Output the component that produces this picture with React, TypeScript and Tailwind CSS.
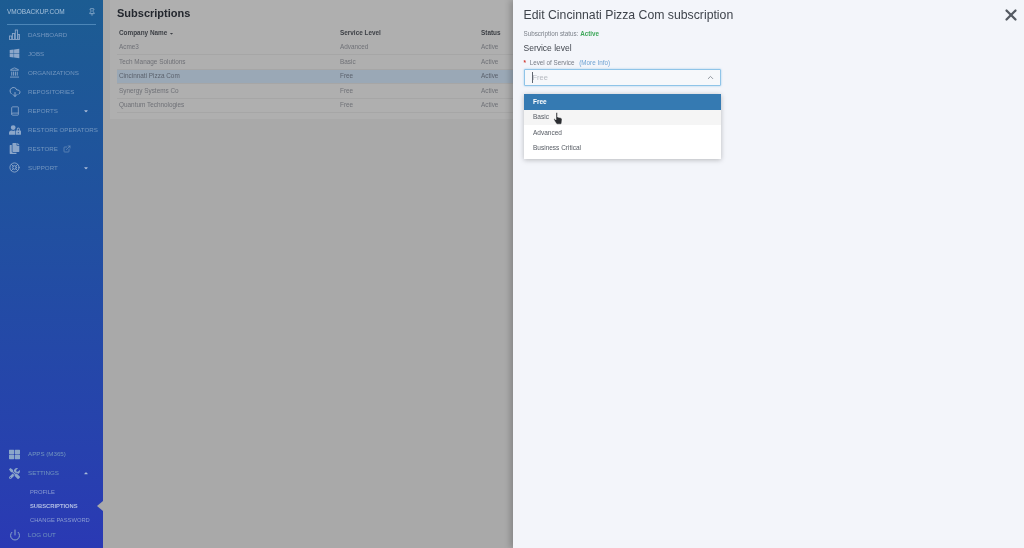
import { Book, ChevronUp, CloudDownload, ExternalLink, Landmark, LifeBuoy, Pin, Power, X } from "lucide-react";
import type { ReactNode } from "react";
import { FaWindows, FaUserLock, FaCopy, FaThLarge, FaTools, FaCaretDown, FaCaretUp } from "react-icons/fa";

const rows = [
  { name: "Acme3", level: "Advanced" },
  { name: "Tech Manage Solutions", level: "Basic" },
  { name: "Cincinnati Pizza Com", level: "Free", active: true },
  { name: "Synergy Systems Co", level: "Free" },
  { name: "Quantum Technologies", level: "Free" },
];

function BarsIcon() {
  return (
    <svg width="11" height="11" viewBox="0 0 11 11" fill="none" stroke="currentColor" strokeWidth="0.9">
      <rect x="0.5" y="7" width="2.2" height="3.5" />
      <rect x="3.400" y="4.5" width="2.2" height="6" />
      <rect x="6.300" y="1" width="2.200" height="9.500" />
      <rect x="9" y="5.500" width="1.500" height="5" />
    </svg>
  );
}

function NavItem({ icon, label, caret, children }: { icon: ReactNode; label: string; caret?: "up" | "down"; children?: ReactNode }) {
  return (
    <div className="flex h-[19px] items-center pl-[2px] pr-[14px] text-[6.2px] text-[#7396bf]">
      <span className="mr-[1px] flex w-[25px] shrink-0 justify-center text-[11px] text-[#8ba6c9]">{icon}</span>
      <span className="whitespace-nowrap">{label}</span>
      {children}
      {caret && (
        <span className="ml-auto text-[6px] text-[#a9bbd8]">
          {caret === "up" ? <FaCaretUp /> : <FaCaretDown />}
        </span>
      )}
    </div>
  );
}

export default function App() {
  return (
    <div className="flex h-[548px] w-[1024px] overflow-hidden bg-[#a9a9a9] font-['Liberation_Sans',Arial,sans-serif]">
      {/* Sidebar, dimmed behind the panel */}
      <aside className="relative w-[103px] shrink-0 bg-gradient-to-b from-[#1c5c92] to-[#2a39b4]">
        <div className="flex h-full flex-col blur-[0.45px]">
          <div className="mx-[7px] flex h-[25px] items-center justify-between border-b border-[#4c86b8] text-[6.5px] text-[#a6c0da]">
            <span>VMOBACKUP.COM</span>
            <Pin size={8} />
          </div>
          <div>
            <NavItem icon={<BarsIcon />} label="DASHBOARD" />
            <NavItem icon={<FaWindows />} label="JOBS" />
            <NavItem icon={<Landmark size={11} />} label="ORGANIZATIONS" />
            <NavItem icon={<CloudDownload size={12} />} label="REPOSITORIES" />
            <NavItem icon={<Book size={10} />} label="REPORTS" caret="down" />
            <NavItem icon={<FaUserLock className="text-[12px]" />} label="RESTORE OPERATORS" />
            <NavItem icon={<FaCopy />} label="RESTORE">
              <ExternalLink size={8} className="ml-[5px]" />
            </NavItem>
            <NavItem icon={<LifeBuoy size={11} />} label="SUPPORT" caret="down" />
          </div>
          <div className="mt-auto pb-[3.5px]">
            <NavItem icon={<FaThLarge />} label="APPS (M365)" />
            <NavItem icon={<FaTools />} label="SETTINGS" caret="up" />
            <div className="-mb-[1.5px] pl-[30px] pt-[2.5px] text-[5.8px] leading-[14px] text-[#8a9bd2]">
              <div>PROFILE</div>
              <div className="font-bold text-[#b3bfe4]">SUBSCRIPTIONS</div>
              <div>CHANGE PASSWORD</div>
            </div>
            <NavItem icon={<Power size={12} />} label="LOG OUT" />
          </div>
        </div>
        <span className="absolute bottom-[37px] right-0 h-0 w-0 border-y-[5px] border-r-[6px] border-y-transparent border-r-[#a9a9a9]" />
      </aside>

      {/* Page under the overlay */}
      <main className="min-w-0 flex-1 pl-[7px]">
        <div className="h-[119px] overflow-hidden bg-[#afafaf] pl-[7px] blur-[0.45px]">
          <h1 className="pt-[6px] text-[11px] leading-[15px] font-bold text-[#23272e]">Subscriptions</h1>
          <table className="mt-[5px] w-full table-fixed text-[6.4px] text-[#6f7177]">
            <thead>
              <tr className="h-[14px] text-left font-bold text-[#3d4046]">
                <th className="w-[223px] pl-[2px]">Company Name <FaCaretDown className="inline text-[5px]" /></th>
                <th className="w-[141px]">Service Level</th>
                <th>Status</th>
              </tr>
            </thead>
            <tbody>
              {rows.map((r) => (
                <tr key={r.name} className={`h-[14.5px] border-b border-[#a6a6a6] ${r.active ? "bg-[#9aa8b6] text-[#5c626d]" : ""}`}>
                  <td className="pl-[2px]">{r.name}</td>
                  <td>{r.level}</td>
                  <td>Active</td>
                </tr>
              ))}
            </tbody>
          </table>
        </div>
      </main>

      {/* Edit panel */}
      <section className="relative w-[511px] shrink-0 bg-[#f3f5fa] pl-[10.5px] shadow-[-3px_0_6px_rgba(0,0,0,0.2)]">
        <button className="absolute right-[4px] top-[6px] text-[#555a62]">
          <X size={18} strokeWidth={3} />
        </button>
        <div className="blur-[0.3px]">
          <h2 className="pt-[7px] text-[12.25px] leading-[17px] text-[#3f444c]">Edit Cincinnati Pizza Com subscription</h2>
          <p className="mt-[5px] text-[6.3px] leading-[9px] text-[#7b8089]">
            Subscription status: <span className="font-bold text-[#3fa85a]">Active</span>
          </p>
          <p className="mt-[5px] text-[8.5px] leading-[11px] text-[#42474f]">Service level</p>
          <p className="mt-[4px] text-[6.3px] leading-[9px] text-[#767b84]">
            <span className="mr-[2px] font-bold text-[#d0342c]">*</span> Level of Service{" "}
            <span className="ml-[3px] text-[#6fa3d3]">(More Info)</span>
          </p>
          <div className="mt-[2px] flex h-[17px] w-[197.5px] items-center justify-between rounded-[1px] border border-[#8fc4e8] bg-[#f6f8fb] pl-[7px] pr-[5px] text-[7.5px] text-[#b6bac1] shadow-[0_0_2px_rgba(90,170,225,0.6)]">
            <span className="border-l border-[#5f6670]">Free</span>
            <ChevronUp size={9} strokeWidth={2.5} className="text-[#8b9098]" />
          </div>
          <div className="mt-[8px] w-[197px] bg-white pb-[3px] text-[6.5px] text-[#555a62] shadow-[0_1px_5px_rgba(0,0,0,0.25)]">
            <div className="flex h-[15.5px] items-center bg-[#357ab2] pl-[9.5px] font-bold text-white">Free</div>
            <div className="flex h-[15.5px] items-center bg-[#f5f5f5] pl-[9.5px]">Basic</div>
            <div className="flex h-[15.5px] items-center pl-[9.5px]">Advanced</div>
            <div className="flex h-[15.5px] items-center pl-[9.5px]">Business Critical</div>
          </div>
        </div>
        {/* Hand cursor from the recording */}
        <svg className="absolute left-[40px] top-[112px]" width="10" height="13" viewBox="0 0 10 13">
          <path d="M3 1.2c0-.9 1.5-.9 1.5 0V5l3 .8c1 .3 1.6.9 1.5 2L8.700 11c0 .7-.5 1.200-1.200 1.200H4.500c-.6 0-1-.3-1.300-.8L1 8c-.5-.8.500-1.600 1.200-.9L3 8V1.200z" fill="#2a2c30" stroke="#fff" strokeWidth="0.5" />
        </svg>
      </section>
    </div>
  );
}
